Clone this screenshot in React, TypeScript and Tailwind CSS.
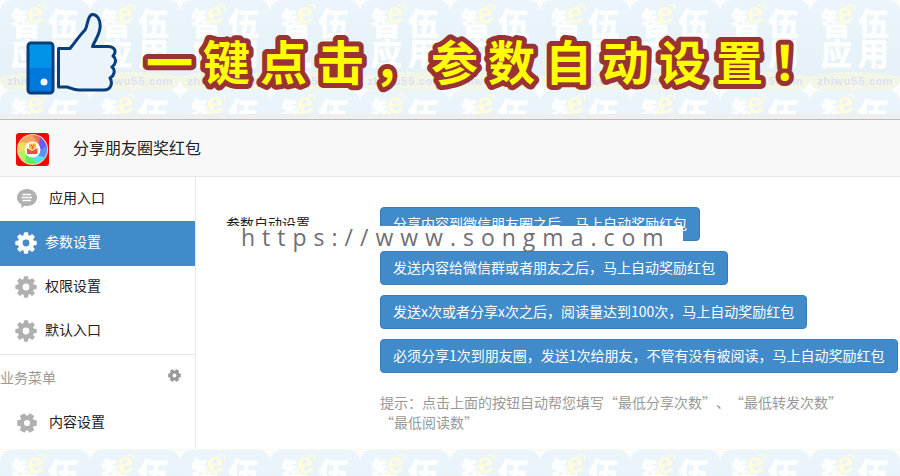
import React from "react";

const cjk = "font-['Noto_Sans_CJK_SC',sans-serif]";

function PatternBand({ id }: { id: string }) {
  return (
    <svg className="block h-full w-full" aria-hidden="true">
      <defs>
        <linearGradient id={`${id}-sky`} x1="0" y1="0" x2="0" y2="1">
          <stop offset="0" stopColor="#ebf5fb" />
          <stop offset="1" stopColor="#e5eff7" />
        </linearGradient>
        <clipPath id={`${id}-clip`}>
          <rect width="90" height="90" rx="12" />
        </clipPath>
        <pattern id={`${id}-tile`} width="90" height="90" patternUnits="userSpaceOnUse">
          <rect width="90" height="90" fill="#fbfdfc" />
          <g clipPath={`url(#${id}-clip)`}>
            <rect width="90" height="90" fill={`url(#${id}-sky)`} />
            <ellipse cx="45" cy="86" rx="60" ry="14" fill="#f1f6e6" />
            <g fill="#fdfefe" stroke="#fdfefe" strokeWidth="0.800" fontSize="31" className="font-bold">
              <text x="11" y="35">智</text>
              <text x="48" y="35">伍</text>
              <text x="11" y="65">应</text>
              <text x="48" y="65">用</text>
            </g>
            <circle cx="36" cy="15" r="9.500" fill="#eaf4fa" />
            <text x="27" y="23" fontSize="30" fill="#fdfcdc" className="font-['Liberation_Sans',sans-serif] font-bold" transform="rotate(-12 36 15)">
              e
            </text>
            <path d="M28 21 C24 25 29 25 34 21 M38 6 C44 3 46 5 44 10" fill="none" stroke="#fdfcdc" strokeWidth="1.500" />
            <text x="45" y="85" fontSize="11" textAnchor="middle" fill="#dfe1f2" className="font-['Inter',sans-serif] font-bold tracking-wide">
              zhiwu55.com
            </text>
          </g>
        </pattern>
      </defs>
      <rect width="100%" height="100%" fill={`url(#${id}-tile)`} />
    </svg>
  );
}

function ThumbIcon() {
  return (
    <svg width="92" height="84" viewBox="26 12 92 84" className="shrink-0" aria-hidden="true">
      <path
        d="M58.500 48.500 H70 C76 41 80 35 85 30 C88 26 87 16 92 14.500 C97 14 101 20 100 28 C99 36 95 40 92.500 46.500 H107 C115 46 117 52 113 56 C117 59 116 64 112 67 C116 70 114 76 110 78 C113 83 111 90 104 90 H79 C73 90 71 88 67 87 H58.500 Z"
        fill="#ebf4fa"
        stroke="#063f7c"
        strokeWidth="3"
        strokeLinejoin="round"
      />
      <rect x="28" y="43" width="25" height="50" rx="2" fill="#0093e8" />
      <path d="M28 68 H53 V93 H28 Z" fill="#0078dc" />
      <rect x="28" y="43" width="25" height="50" rx="3" fill="none" stroke="#063f7c" strokeWidth="3" />
      <circle cx="44" cy="82" r="3.500" fill="#eef4fa" />
    </svg>
  );
}

function AppLogo() {
  const blades = ["#f0705c", "#6a5cf0", "#4f96f5", "#55e2f0", "#5cf05c", "#b4f060", "#f5dc5c", "#f5a85c"];
  return (
    <svg width="33" height="33" viewBox="0 0 33 33" className="mt-1" aria-hidden="true">
      <rect width="33" height="33" rx="3" fill="#fb0007" />
      <circle cx="16.500" cy="16.500" r="15.500" fill="#f0d8b4" />
      {blades.map((color, i) => (
        <path key={color} d="M13 2.500 A14.500 14.500 0 0 1 26.750 6.250 L24 18 Z" fill={color} transform={`rotate(${i * 45} 16.500 16.500)`} />
      ))}
      <circle cx="16.500" cy="16.500" r="8" fill="#fff" />
      <path d="M11 15 L16 18 L21.500 15 V21 H11 Z" fill="#f2503f" />
      <path d="M13 10.500 H20 V15 L16.500 17.500 L13 15 Z" fill="#f5b93c" />
      <path d="M15 12 L16.500 13.500 L18 12 M16.500 13.500 V16" stroke="#f2503f" fill="none" />
    </svg>
  );
}

function Gear({ size = 22, teeth = 8 }: { size?: number; teeth?: number }) {
  const wide = teeth === 6;
  return (
    <svg width={size} height={size} viewBox="0 0 22 22" className="shrink-0" fill="currentColor" aria-hidden="true">
      <circle cx="11" cy="11" r="5.800" fill="none" stroke="currentColor" strokeWidth="4.800" />
      {Array.from({ length: teeth }, (_, i) => (
        <rect
          key={i}
          x={wide ? 7.8 : 8.8}
          y="0.300"
          width={wide ? 6.4 : 4.4}
          height="5"
          rx="1"
          transform={`rotate(${(i * 360) / teeth + (wide ? 30 : 0)} 11 11)`}
        />
      ))}
    </svg>
  );
}

function Bubble() {
  return (
    <svg width="20" height="20" viewBox="0 0 20 20" className="shrink-0" aria-hidden="true">
      <path d="M10 0 C15.500 0 20 3.700 20 8.500 C20 13.500 15.500 17 10 17 C9 17 8.200 16.900 7.400 16.700 L4.500 19.500 V15.400 C1.700 14 0 11.500 0 8.500 C0 3.700 4.500 0 10 0 Z" fill="#b0b0b0" />
      <path d="M5.500 5.500 H14 M4.500 8.500 H15 M5.500 11.500 H14" stroke="#fff" strokeWidth="1.300" />
    </svg>
  );
}

function NavItem({ icon, label, active, inset }: { icon: React.ReactNode; label: string; active?: boolean; inset?: boolean }) {
  return (
    <a
      href="#"
      className={`flex h-11 items-center ${inset ? "gap-3 pl-[17px]" : "gap-2 pl-[15px]"} ${
        active ? "bg-[#428bca] text-white shadow-[0_1px_0_#428bca]" : "text-[#b0b0b0]"
      }`}
    >
      {icon}
      <span className={`pb-1 ${active ? "text-white" : "text-[#222]"}`}>{label}</span>
    </a>
  );
}

const presets = [
  "分享内容到微信朋友圈之后，马上自动奖励红包",
  "发送内容给微信群或者朋友之后，马上自动奖励红包",
  "发送x次或者分享x次之后，阅读量达到100次，马上自动奖励红包",
  "必须分享1次到朋友圈，发送1次给朋友，不管有没有被阅读，马上自动奖励红包",
];

export default function App() {
  return (
    <div lang="zh-CN" className={`overflow-hidden text-sm leading-5 text-[#222] ${cjk}`}>
      <div className="relative h-[114px] overflow-hidden">
        <div className="absolute inset-0">
          <PatternBand id="top" />
        </div>
        <div className="relative flex items-start gap-6 pt-3 pl-[26px]">
          <ThumbIcon />
          <h1>
            <svg width="700" height="96" className="block overflow-visible">
              <text
                x="4"
                y="68"
                className="text-[47px] font-bold tracking-[10px]"
                fill="#ffff00"
                stroke="#993333"
                strokeWidth="10"
                strokeLinejoin="round"
                paintOrder="stroke"
              >
                一键点击，参数自动设置！
              </text>
            </svg>
          </h1>
        </div>
      </div>

      <header className="flex h-[63px] items-center gap-6 border-t-[5px] border-b border-t-[#efefef] border-b-[#e7e7e7] bg-[#f8f8f8] pl-4 shadow-[inset_0_1px_0_#bbb]">
        <AppLogo />
        <h2 className="pb-0.5 text-base">分享朋友圈奖红包</h2>
      </header>

      <div className="flex bg-white">
        <nav className="w-[196px] shrink-0 border-r border-[#e7e7e7] pb-1">
          <NavItem inset icon={<Bubble />} label="应用入口" />
          <NavItem active icon={<Gear />} label="参数设置" />
          <NavItem icon={<Gear />} label="权限设置" />
          <NavItem icon={<Gear />} label="默认入口" />
          <div className="mt-px flex h-[47px] items-center justify-between border-t border-[#e7e7e7] pr-[14px] pb-0.5 text-[#999]">
            <span>业务菜单</span>
            <button type="button" aria-label="设置" className="pb-1">
              <Gear size={13} teeth={6} />
            </button>
          </div>
          <NavItem inset icon={<Gear size={20} teeth={6} />} label="内容设置" />
        </nav>

        <main className="relative flex min-w-0 flex-1 pt-[30px] pl-[30px]">
          <div className="w-[154px] shrink-0 pt-1.5">参数自动设置</div>
          <div className="flex flex-col items-start gap-[10px]">
            {presets.map((text) => (
              <button
                key={text}
                type="button"
                className="h-[34px] rounded border border-[#357ebd] bg-[#428bca] px-3 pb-0.5 whitespace-nowrap text-white"
              >
                {text}
              </button>
            ))}
            <p className="pt-[9px] text-[#999] [text-spacing-trim:space-all]">
              提示：点击上面的按钮自动帮您填写“最低分享次数”、“最低转发次数”
              <br />
              “最低阅读数”
            </p>
          </div>
          <div className="absolute top-[49px] left-[30px] h-[25px] w-[457px] bg-white pl-[15px] font-['Open_Sans',sans-serif] text-[23px] leading-[22px] tracking-[7px] whitespace-nowrap text-[#6f7075]">
            https://www.songma.com
          </div>
        </main>
      </div>

      <footer className="h-[27px] overflow-hidden border-t border-[#f7f9ef]">
        <PatternBand id="bottom" />
      </footer>
    </div>
  );
}
